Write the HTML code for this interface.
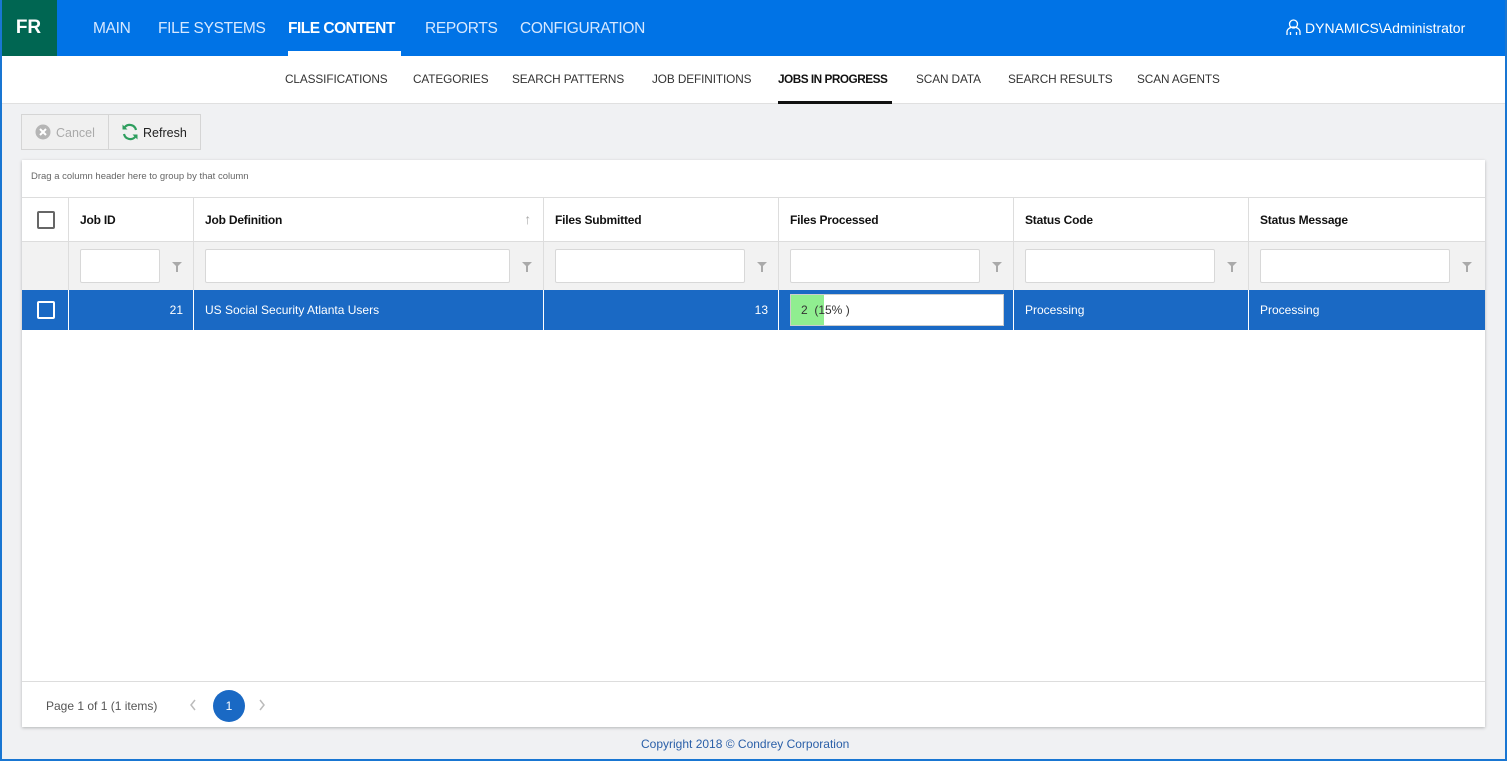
<!DOCTYPE html>
<html><head><style>
*{box-sizing:border-box;margin:0;padding:0}
body{width:1507px;height:761px;background:#f0f1f3;font-family:"Liberation Sans",sans-serif;position:relative;overflow:hidden}
.frame{position:absolute;left:0;top:0;width:1507px;height:761px;border-left:2px solid #1976d2;border-right:2px solid #1976d2;border-bottom:2px solid #1976d2;pointer-events:none;z-index:9}
.top{position:absolute;left:0;top:0;width:1507px;height:56px;background:#0073e6}
.logo{position:absolute;left:0;top:0;width:57px;height:56px;background:#006652;color:#fff;font-weight:bold;font-size:19px;line-height:56px;text-align:center}
.nav a{position:absolute;top:20px;color:#d6e8ff;font-size:15.5px;letter-spacing:-0.3px}
.nav a.act{color:#fff;font-weight:bold;letter-spacing:-0.5px}
.ul{position:absolute;left:288px;top:51px;width:113px;height:5px;background:#fff}
.user{position:absolute;left:1286px;top:19px;color:#fff;font-size:14px}
.sub{position:absolute;left:0;top:56px;width:1507px;height:48px;background:#fff;border-bottom:1px solid #e0e0e0}
.sub a{position:absolute;top:16px;font-size:11.8px;color:#333;letter-spacing:-0.1px}
.sub a.act{font-weight:bold;color:#111;font-size:11.8px;letter-spacing:-0.5px;top:16px}
.subul{position:absolute;left:778px;top:45px;width:114px;height:3px;background:#111}
.tb{position:absolute;left:21px;top:114px;width:180px;height:36px;border:1px solid #d5d5d5;background:#f0f0f0}
.tb .sep{position:absolute;left:86px;top:0;width:1px;height:34px;background:#d5d5d5}
.tb span{position:absolute;top:11px;font-size:12.5px}
.grid{position:absolute;left:22px;top:160px;width:1463px;height:567px;background:#fff;box-shadow:0 1px 3px rgba(0,0,0,.25)}
.grp{height:38px;font-size:9.5px;color:#666;padding:11px 9px;border-bottom:1px solid #ddd}
.c{position:absolute;border-right:1px solid #ddd}
.hd{font-weight:bold;font-size:12px;color:#111;letter-spacing:-0.2px}
.fl{position:absolute;height:34px;background:#fff;border:1px solid #d8d8d8;border-radius:2px;top:7px}
.fun{position:absolute;top:20px;width:0;height:0;border-left:5px solid transparent;border-right:5px solid transparent;border-top:5px solid #aaa}
.fun:after{content:"";position:absolute;left:-1px;top:-1px;width:2px;height:6px;background:#aaa}
.cb{position:absolute;left:15px;width:18px;height:18px;border:2px solid #666;border-radius:2px}
.row{position:absolute;left:0;top:130px;width:1463px;height:40px;background:#1a69c4;color:#fff;font-size:12px}
.row>div{position:absolute;top:0;height:40px;line-height:40px;border-right:1px solid #fff}
</style></head><body>
<div class="frame"></div>
<div class="top">
<div class="logo">FR</div>
<div class="nav"><a style="left:93px">MAIN</a><a style="left:158px">FILE SYSTEMS</a><a class="act" style="left:288px">FILE CONTENT</a><a style="left:425px">REPORTS</a><a style="left:520px">CONFIGURATION</a></div>
<div class="ul"></div>
<div class="user"><svg width="15" height="16" viewBox="0 0 15 16" style="vertical-align:-2px;margin-right:4px"><circle cx="7.5" cy="5" r="4" fill="none" stroke="#fff" stroke-width="1.3"/><path d="M1 16V13a6.5 5 0 0 1 13 0V16M4.5 16v-3M10.5 16v-3" fill="none" stroke="#fff" stroke-width="1.3"/></svg>DYNAMICS\Administrator</div>
</div>
<div class="sub">
<a style="left:285px">CLASSIFICATIONS</a><a style="left:413px">CATEGORIES</a><a style="left:512px">SEARCH PATTERNS</a><a style="left:652px">JOB DEFINITIONS</a><a class="act" style="left:778px">JOBS IN PROGRESS</a><a style="left:916px">SCAN DATA</a><a style="left:1008px">SEARCH RESULTS</a><a style="left:1137px">SCAN AGENTS</a>
<div class="subul"></div>
</div>
<div class="tb"><div class="sep"></div>
<svg style="position:absolute;left:13px;top:9px" width="16" height="16"><circle cx="8" cy="8" r="7.5" fill="#b5b5b5"/><path d="M5 5l6 6M11 5l-6 6" stroke="#fff" stroke-width="2"/></svg>
<span style="left:34px;color:#aaa">Cancel</span>
<svg style="position:absolute;left:99px;top:8px" width="18" height="18" viewBox="0 0 18 18"><path d="M15 7A6.5 6.5 0 0 0 3.5 4.5M3 11a6.5 6.5 0 0 0 11.5 2.5" fill="none" stroke="#2e9e5e" stroke-width="2.2"/><path d="M1.5 1.5v5h5zM16.5 16.5v-5h-5z" fill="#2e9e5e"/></svg>
<span style="left:121px;color:#222">Refresh</span></div>
<div class="grid">
<div class="grp">Drag a column header here to group by that column</div>
<div style="position:absolute;left:0;top:38px;width:1463px;height:44px;border-bottom:1px solid #ddd">
<div class="c" style="left:0;width:47px;height:44px"><div class="cb" style="top:13px"></div></div>
<div class="c hd" style="left:47px;width:125px;height:44px;padding:15px 11px">Job ID</div>
<div class="c hd" style="left:172px;width:350px;height:44px;padding:15px 11px">Job Definition<span style="position:absolute;right:12px;top:13px;color:#aaa;font-weight:normal;font-size:14px">↑</span></div>
<div class="c hd" style="left:522px;width:235px;height:44px;padding:15px 11px">Files Submitted</div>
<div class="c hd" style="left:757px;width:235px;height:44px;padding:15px 11px">Files Processed</div>
<div class="c hd" style="left:992px;width:235px;height:44px;padding:15px 11px">Status Code</div>
<div class="c hd" style="left:1227px;width:236px;height:44px;padding:15px 11px;border:none">Status Message</div>
</div>
<div style="position:absolute;left:0;top:82px;width:1463px;height:48px;background:#f2f2f2">
<div class="c" style="left:0;width:47px;height:48px"></div>
<div class="c" style="left:47px;width:125px;height:48px"><div class="fl" style="left:11px;width:80px"></div><div class="fun" style="left:103px"></div></div>
<div class="c" style="left:172px;width:350px;height:48px"><div class="fl" style="left:11px;width:305px"></div><div class="fun" style="left:328px"></div></div>
<div class="c" style="left:522px;width:235px;height:48px"><div class="fl" style="left:11px;width:190px"></div><div class="fun" style="left:213px"></div></div>
<div class="c" style="left:757px;width:235px;height:48px"><div class="fl" style="left:11px;width:190px"></div><div class="fun" style="left:213px"></div></div>
<div class="c" style="left:992px;width:235px;height:48px"><div class="fl" style="left:11px;width:190px"></div><div class="fun" style="left:213px"></div></div>
<div class="c" style="left:1227px;width:236px;height:48px;border:none"><div class="fl" style="left:11px;width:190px"></div><div class="fun" style="left:213px"></div></div>
</div>
<div class="row">
<div style="left:0;width:47px"><div class="cb" style="top:11px;border-color:#fff"></div></div>
<div style="left:47px;width:125px;text-align:right;padding-right:10px">21</div>
<div style="left:172px;width:350px;padding-left:11px">US Social Security Atlanta Users</div>
<div style="left:522px;width:235px;text-align:right;padding-right:10px">13</div>
<div style="left:757px;width:235px"><div style="position:absolute;left:11px;top:4px;width:214px;height:32px;background:#fff;border:1px solid #ccc;color:#333;line-height:30px;font-size:12px"><div style="position:absolute;left:0;top:0;width:33px;height:30px;background:#90ee90"></div><span style="position:relative;padding-left:10px">2&nbsp;&nbsp;(15%&nbsp;)</span></div></div>
<div style="left:992px;width:235px;padding-left:11px">Processing</div>
<div style="left:1227px;width:236px;padding-left:11px;border:none">Processing</div>
</div>
<div style="position:absolute;left:0;top:521px;width:1463px;height:46px;border-top:1px solid #ddd;font-size:12px;color:#555">
<span style="position:absolute;left:24px;top:17px">Page 1 of 1 (1 items)</span>
<svg style="position:absolute;left:167px;top:17px" width="8" height="12"><path d="M6 1L2 6l4 5" fill="none" stroke="#bbb" stroke-width="1.5"/></svg>
<div style="position:absolute;left:191px;top:8px;width:32px;height:32px;border-radius:50%;background:#1a69c4;color:#fff;text-align:center;line-height:32px">1</div>
<svg style="position:absolute;left:236px;top:17px" width="8" height="12"><path d="M2 1l4 5-4 5" fill="none" stroke="#bbb" stroke-width="1.5"/></svg>
</div>
</div>
<div style="position:absolute;left:641px;top:737px;font-size:12px;color:#2a5fa8">Copyright 2018 © Condrey Corporation</div>
</body></html>
